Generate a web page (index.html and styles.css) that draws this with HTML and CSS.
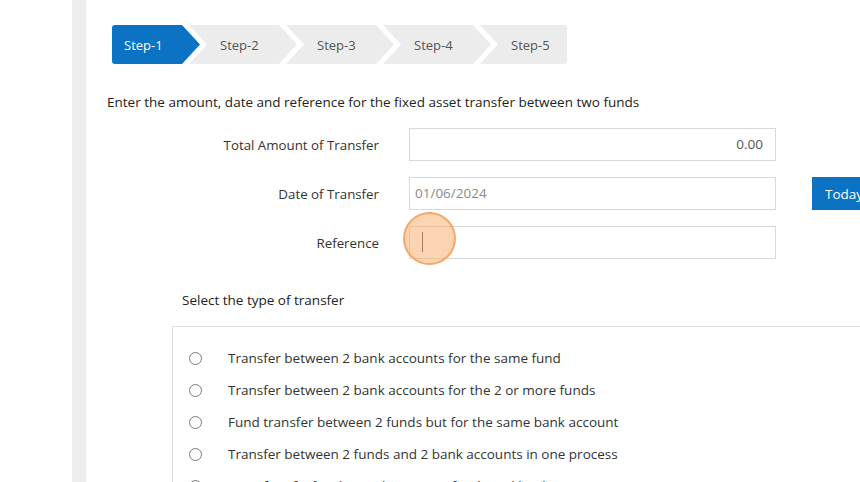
FILE: index.html
```html
<!DOCTYPE html>
<html lang="en">
<head>
<meta charset="utf-8">
<title>Fixed asset transfer</title>
<link rel="stylesheet" href="styles.css">
</head>
<body>
<div class="page">
  <div class="gutter"></div>
  <div class="rail"></div>
  <main class="main">
    <ol class="steps">
      <li class="step step-first active">Step-1</li>
      <li class="step">Step-2</li>
      <li class="step">Step-3</li>
      <li class="step">Step-4</li>
      <li class="step step-last">Step-5</li>
    </ol>

    <p class="intro">Enter the amount, date and reference for the fixed asset transfer between two funds</p>

    <div class="form">
      <label class="lbl">Total Amount of Transfer</label>
      <div class="field"><span class="inp num">0.00</span></div>
      <div class="extra"></div>

      <label class="lbl">Date of Transfer</label>
      <div class="field"><span class="inp muted">01/06/2024</span></div>
      <div class="extra"><button class="btn" type="button">Today</button></div>

      <label class="lbl">Reference</label>
      <div class="field">
        <span class="inp"></span>
        <span class="caret"></span>
        <span class="click"></span>
      </div>
      <div class="extra"></div>
    </div>

    <p class="section-title">Select the type of transfer</p>

    <div class="options">
      <div class="opt"><span class="radio"></span>Transfer between 2 bank accounts for the same fund</div>
      <div class="opt"><span class="radio"></span>Transfer between 2 bank accounts for the 2 or more funds</div>
      <div class="opt"><span class="radio"></span>Fund transfer between 2 funds but for the same bank account</div>
      <div class="opt"><span class="radio"></span>Transfer between 2 funds and 2 bank accounts in one process</div>
      <div class="opt"><span class="radio"></span>Transfer of a fixed asset between 2 funds and bank accounts</div>
    </div>
  </main>
</div>
</body>
</html>
```

FILE: styles.css
```css
html, body {
  margin: 0;
  padding: 0;
  background: #ffffff;
  overflow: hidden;
}

body {
  font-family: "Open Sans", "Noto Sans", "Liberation Sans", sans-serif;
  font-size: 13.5px;
  color: #333333;
}

.page {
  display: flex;
  width: 860px;
  height: 482px;
  overflow: hidden;
}

.gutter {
  flex: 0 0 72px;
  background: #ffffff;
}

.rail {
  flex: 0 0 14px;
  background: #eeeeee;
}

.main {
  flex: 1 1 auto;
  min-width: 0;
  padding-top: 25px;
  overflow: hidden;
}

/* ---------- wizard steps ---------- */
.steps {
  display: flex;
  list-style: none;
  margin: 0 0 0 26px;
  padding: 0;
  height: 39px;
}

.step {
  box-sizing: border-box;
  height: 39px;
  line-height: 40px;
  width: 108px;
  margin-left: -11px;
  padding-left: 31px;
  background: #ececec;
  color: #555555;
  font-size: 13px;
  clip-path: polygon(0 0, calc(100% - 18px) 0, 100% 50%, calc(100% - 18px) 100%, 0 100%, 18px 50%);
}

.step-first {
  width: 88px;
  margin-left: 0;
  padding-left: 12px;
  border-radius: 3px 0 0 3px;
  clip-path: polygon(0 0, 70px 0, 100% 50%, 70px 100%, 0 100%);
}

.step-last {
  width: 87px;
  border-radius: 0 3px 3px 0;
  clip-path: polygon(0 0, 100% 0, 100% 100%, 0 100%, 18px 50%);
}

.step.active {
  background: #0b72c4;
  color: #ffffff;
}

/* ---------- intro ---------- */
.intro {
  margin: 28px 0 0 21px;
  line-height: 20px;
  color: #222222;
}

/* ---------- form ---------- */
.form {
  display: grid;
  grid-template-columns: 272px 367px auto;
  grid-auto-rows: 33px;
  column-gap: 30px;
  row-gap: 16px;
  margin: 16px 0 0 21px;
}

.lbl {
  align-self: center;
  text-align: right;
  color: #333333;
  font-size: 13.3px;
}

.field {
  position: relative;
}

.inp {
  box-sizing: border-box;
  display: block;
  height: 33px;
  line-height: 31px;
  border: 1px solid #d9d9d9;
  padding: 0 12px 0 5px;
  color: #555555;
  background: #ffffff;
}

.inp.num {
  text-align: right;
}

.inp.muted {
  color: #8a8a8a;
}

.extra {
  display: flex;
  align-items: stretch;
}

.btn {
  margin-left: 6px;
  height: 33px;
  width: 70px;
  border: none;
  padding: 0 0 0 13px;
  text-align: left;
  background: #0b72c4;
  color: #ffffff;
  font-family: inherit;
  font-size: 13.5px;
}

.caret {
  position: absolute;
  left: 13px;
  top: 6px;
  width: 1px;
  height: 20px;
  background: #555555;
}

.click {
  position: absolute;
  left: -6px;
  top: -14px;
  width: 49px;
  height: 49px;
  border-radius: 50%;
  background: rgba(251, 170, 100, 0.5);
  border: 2px solid rgba(244, 160, 90, 0.85);
}

/* ---------- transfer type ---------- */
.section-title {
  margin: 31px 0 0 96px;
  line-height: 20px;
  color: #222222;
}

.options {
  margin: 16px 0 0 86px;
  width: 760px;
  border-top: 1px solid #dddddd;
  border-left: 1px solid #dddddd;
  padding: 15px 0 0 16px;
}

.opt {
  display: flex;
  align-items: center;
  height: 32px;
  color: #333333;
}

.radio {
  box-sizing: border-box;
  flex: 0 0 13px;
  width: 13px;
  height: 13px;
  border: 1px solid #7a7a7a;
  border-radius: 50%;
  margin-right: 26px;
}
```
